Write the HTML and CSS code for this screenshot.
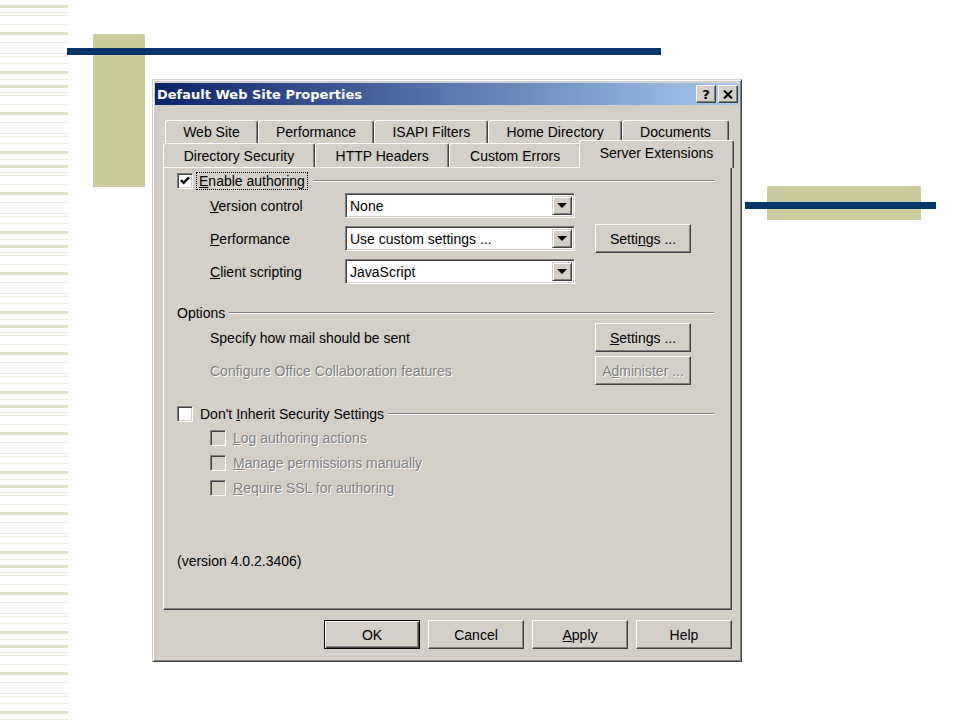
FILE: index.html
```html
<!DOCTYPE html>
<html lang="en">
<head>
    <meta charset="UTF-8">
    <title>Default Web Site Properties</title>
    <link rel="stylesheet" href="styles.css">
</head>
<body>
<div class="slide">
    <div class="stripes"></div>
    <div class="deco block-left"></div>
    <div class="deco line-top"></div>
    <div class="deco block-right"></div>
    <div class="deco line-right"></div>

    <div class="dialog">
        <div class="titlebar">
            <span class="title">Default Web Site Properties</span>
            <div class="cap-btns">
                <span class="cap-btn">?</span>
                <span class="cap-btn">
                    <svg width="10" height="9" viewBox="0 0 10 9"><path d="M1 0.5 L9 8.5 M9 0.5 L1 8.5" stroke="#000" stroke-width="2"/></svg>
                </span>
            </div>
        </div>

        <div class="tabs">
            <div class="tab-row back">
                <div class="tab">Web Site</div>
                <div class="tab">Performance</div>
                <div class="tab">ISAPI Filters</div>
                <div class="tab">Home Directory</div>
                <div class="tab">Documents</div>
            </div>
            <div class="tab-row front">
                <div class="tab">Directory Security</div>
                <div class="tab">HTTP Headers</div>
                <div class="tab">Custom Errors</div>
                <div class="tab active">Server Extensions</div>
            </div>
        </div>

        <div class="panel">
            <div class="group-head">
                <span class="checkbox checked">
                    <svg width="12" height="12" viewBox="0 0 12 12"><path d="M2 5.2 L4.6 7.8 L10 2.4" fill="none" stroke="#000" stroke-width="2.4"/></svg>
                </span>
                <span class="focus"><u>E</u>nable authoring</span>
                <span class="etched"></span>
            </div>

            <div class="field first">
                <span class="field-label"><u>V</u>ersion control</span>
                <div class="select"><span class="select-value">None</span><span class="select-arrow"><i class="tri"></i></span></div>
            </div>
            <div class="field">
                <span class="field-label"><u>P</u>erformance</span>
                <div class="select"><span class="select-value">Use custom settings ...</span><span class="select-arrow"><i class="tri"></i></span></div>
                <span class="btn side">Setti<u>n</u>gs ...</span>
            </div>
            <div class="field">
                <span class="field-label"><u>C</u>lient scripting</span>
                <div class="select"><span class="select-value">JavaScript</span><span class="select-arrow"><i class="tri"></i></span></div>
            </div>

            <div class="group-head options">
                <span>Options</span>
                <span class="etched near"></span>
            </div>
            <div class="option-row first">
                <span class="option-label">Specify how mail should be sent</span>
                <span class="btn"><u>S</u>ettings ...</span>
            </div>
            <div class="option-row">
                <span class="option-label disabled">Configure Office Collaboration features</span>
                <span class="btn disabled">A<u>d</u>minister ...</span>
            </div>

            <div class="group-head security">
                <span class="checkbox"></span>
                <span class="check-text">Don't <u>I</u>nherit Security Settings</span>
                <span class="etched near"></span>
            </div>
            <div class="sub-row first">
                <span class="checkbox off"></span>
                <span class="check-text disabled"><u>L</u>og authoring actions</span>
            </div>
            <div class="sub-row">
                <span class="checkbox off"></span>
                <span class="check-text disabled"><u>M</u>anage permissions manually</span>
            </div>
            <div class="sub-row">
                <span class="checkbox off"></span>
                <span class="check-text disabled"><u>R</u>equire SSL for authoring</span>
            </div>

            <div class="version">(version 4.0.2.3406)</div>
        </div>

        <div class="actions">
            <span class="btn default">OK</span>
            <span class="btn">Cancel</span>
            <span class="btn"><u>A</u>pply</span>
            <span class="btn">Help</span>
        </div>
    </div>
</div>
</body>
</html>
```

FILE: styles.css
```css
body {
    margin: 0;
    background: #fff;
    font-family: "Liberation Sans", Arial, sans-serif;
    font-size: 14px;
    color: #000;
}
.slide {
    position: relative;
    width: 960px;
    height: 720px;
    box-sizing: border-box;
    padding: 79px 0 0 152px;
    overflow: hidden;
}
.stripes {
    position: absolute;
    left: 0;
    top: 0;
    width: 68px;
    height: 720px;
    background-image: linear-gradient(to bottom,
        #fff 0 5px, #e2e2cd 5px 8px, #fff 8px 12px, #ececdd 12px 13px,
        #fff 13px 15px, #ececdd 15px 16px, #fff 16px 24px, #ececdd 24px 25px,
        #fff 25px 32px, #e2e2cd 32px 35px, #fff 35px 42px, #ececdd 42px 43px,
        #fff 43px 53px, #ececdd 53px 54px, #fff 54px 56px, #ececdd 56px 57px,
        #fff 57px 63px, #ececdd 63px 64px, #fff 64px 71px, #e2e2cd 71px 74px,
        #fff 74px 79px, #ececdd 79px 80px);
    background-size: 68px 80px;
}
.deco {
    position: absolute;
}
.block-left {
    left: 93px;
    top: 34px;
    width: 52px;
    height: 153px;
    background: #cbcb9c;
}
.line-top {
    left: 67px;
    top: 48px;
    width: 594px;
    height: 7px;
    background: #063669;
}
.block-right {
    left: 767px;
    top: 186px;
    width: 154px;
    height: 34px;
    background: #cbcb9c;
}
.line-right {
    left: 745px;
    top: 202px;
    width: 191px;
    height: 7px;
    background: #063669;
}

/* dialog window */
.dialog {
    position: relative;
    width: 590px;
    height: 583px;
    box-sizing: border-box;
    background: #d4d0c8;
    border: 1px solid;
    border-color: #d4d0c8 #404040 #404040 #d4d0c8;
    box-shadow: inset 1px 1px #fff, inset -1px -1px #808080;
    padding: 3px 2px 0 2px;
}
.titlebar {
    height: 22px;
    display: flex;
    align-items: center;
    justify-content: space-between;
    padding: 0 1px 0 2px;
    background: linear-gradient(to right, #0a246a, #a6caf0);
}
.title {
    color: #fff;
    font-family: "DejaVu Sans", Verdana, sans-serif;
    font-weight: bold;
    font-size: 13px;
}
.cap-btns {
    display: flex;
    gap: 2px;
}
.cap-btn {
    width: 20px;
    height: 18px;
    box-sizing: border-box;
    background: #d4d0c8;
    border: 1px solid;
    border-color: #fff #404040 #404040 #fff;
    box-shadow: inset -1px -1px #808080;
    display: flex;
    align-items: center;
    justify-content: center;
    font-family: "DejaVu Sans", sans-serif;
    font-weight: bold;
    font-size: 13px;
}

/* tabs */
.tabs {
    margin: 15px 7px 0 8px;
}
.tab-row {
    display: flex;
    align-items: flex-start;
}
.tab-row.back {
    height: 23px;
    margin: 0 3px 0 2px;
}
.tab-row.front {
    height: 24px;
}
.tab {
    flex: 1 1 auto;
    height: 100%;
    box-sizing: border-box;
    background: #d4d0c8;
    border-top: 1px solid #fff;
    border-left: 1px solid #fff;
    border-right: 1px solid #404040;
    box-shadow: inset -1px 0 #808080;
    border-radius: 3px 3px 0 0;
    display: flex;
    align-items: center;
    justify-content: center;
    white-space: nowrap;
}
.tab.active {
    height: 28px;
    margin: -3px -2px 0 -2px;
    padding-bottom: 3px;
    position: relative;
    z-index: 1;
}

/* tab page */
.panel {
    height: 443px;
    box-sizing: border-box;
    border: 1px solid;
    border-color: #fff #404040 #404040 #fff;
    box-shadow: inset -1px -1px #808080;
    margin: 0 7px 0 8px;
    padding: 4px 17px 0 13px;
}
.group-head {
    display: flex;
    align-items: center;
    height: 18px;
}
.group-head.options {
    height: 16px;
    margin-top: 21px;
}
.group-head.security {
    margin-top: 20px;
}
.etched {
    flex: 1;
    height: 0;
    border-top: 1px solid #808080;
    border-bottom: 1px solid #fff;
    margin-left: 6px;
}
.etched.near {
    margin-left: 4px;
}
.checkbox {
    width: 16px;
    height: 16px;
    flex: none;
    box-sizing: border-box;
    background: #fff;
    border: 1px solid;
    border-color: #808080 #fff #fff #808080;
    box-shadow: inset 1px 1px #404040, inset -1px -1px #d4d0c8;
    display: flex;
    align-items: center;
    justify-content: center;
}
.checkbox.off {
    background: #d4d0c8;
}
.focus {
    margin-left: 4px;
    padding: 0 2px;
    line-height: 16px;
    outline: 1px dotted #000;
}
.check-text {
    margin-left: 7px;
    white-space: nowrap;
}
.field {
    display: flex;
    align-items: center;
    height: 25px;
    margin-top: 8px;
    padding-left: 33px;
}
.field.first {
    margin-top: 3px;
}
.field-label {
    width: 135px;
}
.select {
    width: 230px;
    height: 25px;
    box-sizing: border-box;
    background: #fff;
    border: 1px solid;
    border-color: #808080 #fff #fff #808080;
    box-shadow: inset 1px 1px #404040, inset -1px -1px #d4d0c8;
    padding: 2px;
    display: flex;
    align-items: center;
}
.select-value {
    flex: 1;
    padding-left: 2px;
}
.select-arrow {
    width: 20px;
    height: 100%;
    box-sizing: border-box;
    background: #d4d0c8;
    border: 1px solid;
    border-color: #d4d0c8 #404040 #404040 #d4d0c8;
    box-shadow: inset 1px 1px #fff, inset -1px -1px #808080;
    display: flex;
    align-items: center;
    justify-content: center;
}
.tri {
    width: 0;
    height: 0;
    border-left: 5px solid transparent;
    border-right: 5px solid transparent;
    border-top: 5px solid #000;
}
.btn {
    width: 96px;
    height: 29px;
    box-sizing: border-box;
    background: #d4d0c8;
    border: 1px solid;
    border-color: #fff #404040 #404040 #fff;
    box-shadow: inset -1px -1px #808080;
    display: flex;
    align-items: center;
    justify-content: center;
    flex: none;
}
.btn.side {
    margin-left: 20px;
}
.btn.default {
    border-color: #000;
    box-shadow: inset 1px 1px #fff, inset -1px -1px #404040, inset -2px -2px #808080;
}
.option-row {
    display: flex;
    align-items: center;
    height: 29px;
    margin-top: 4px;
    padding-left: 33px;
}
.option-row.first {
    margin-top: 2px;
}
.option-label {
    width: 385px;
}
.sub-row {
    display: flex;
    align-items: center;
    height: 18px;
    margin-top: 7px;
    padding-left: 33px;
}
.sub-row.first {
    margin-top: 6px;
}
.disabled {
    color: #808080;
    text-shadow: 1px 1px 0 #fff;
}
.version {
    margin-top: 56px;
    line-height: 16px;
}
.actions {
    display: flex;
    justify-content: flex-end;
    gap: 8px;
    margin: 10px 7px 0 0;
}
```
